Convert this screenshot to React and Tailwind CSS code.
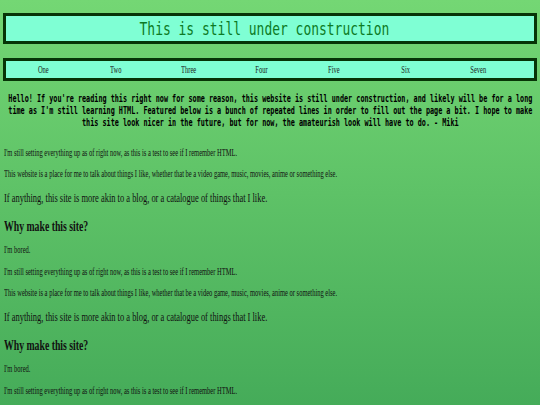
import React from 'react'

const links = ['One', 'Two', 'Three', 'Four', 'Five', 'Six', 'Seven']

const serif = "font-['Liberation_Serif','Times_New_Roman',serif]"

// the page in the picture is squeezed sideways, so every text run is narrowed with scale-x
function Line({ className = '', children }) {
  return (
    <p className={`${serif} text-[#111] whitespace-nowrap ${className}`}>
      <span className="inline-block origin-left scale-x-[0.65]">{children}</span>
    </p>
  )
}

function Block({ first }) {
  return (
    <>
      <Line className={`text-[10px] leading-[12px] ${first ? 'mt-[18px]' : 'mt-[10px]'}`}>
        I'm still setting everything up as of right now, as this is a test to see if I remember HTML.
      </Line>
      <Line className="text-[10px] leading-[12px] mt-[9px]">
        This website is a place for me to talk about things I like, whether that be a video game, music, movies, anime or something else.
      </Line>
      <Line className="text-[13px] leading-[16px] mt-[10px]">
        If anything, this site is more akin to a blog, or a catalogue of things that I like.
      </Line>
      <Line className="text-[15px] leading-[18px] font-bold mt-[11px]">Why make this site?</Line>
      <Line className="text-[10px] leading-[12px] mt-[9px]">I'm bored.</Line>
    </>
  )
}

export default function App() {
  return (
    <div className="min-h-screen w-full overflow-hidden bg-gradient-to-b from-[#74d774] to-[#41a857] px-[3px] pt-[13px] pb-10">
      <header className="h-[31px] border-[3px] border-[#073407] bg-[#7fffd4] flex items-center justify-center pr-[12px]">
        <h1 className="font-['DejaVu_Sans_Mono',monospace] text-[18px] leading-none text-[#0c7a24]">
          <span className="inline-block scale-x-[0.72]">This is still under construction</span>
        </h1>
      </header>

      <nav className="mt-[14px] h-[23px] border-[3px] border-[#073407] bg-[#7fffd4] grid grid-cols-7 items-center pl-px pr-[19px]">
        {links.map((l) => (
          <a key={l} className={`${serif} text-[10px] text-[#1a1a1a] text-center`}>
            <span className="inline-block scale-x-[0.65]">{l}</span>
          </a>
        ))}
      </nav>

      <div className="mt-[12px] flex justify-center">
        <p className="shrink-0 w-[130ch] scale-x-[0.68] font-['DejaVu_Sans_Mono',monospace] font-bold text-[10px] leading-[12px] text-black text-center">
          Hello! If you're reading this right now for some reason, this website is still under construction, and likely will be for a long time as I'm still learning HTML. Featured below is a bunch of repeated lines in order to fill out the page a bit. I hope to make this site look nicer in the future, but for now, the amateurish look will have to do. - Miki
        </p>
      </div>

      <main className="px-px">
        <Block first />
        <Block />
        <Line className="text-[10px] leading-[12px] mt-[10px]">
          I'm still setting everything up as of right now, as this is a test to see if I remember HTML.
        </Line>
      </main>
    </div>
  )
}
